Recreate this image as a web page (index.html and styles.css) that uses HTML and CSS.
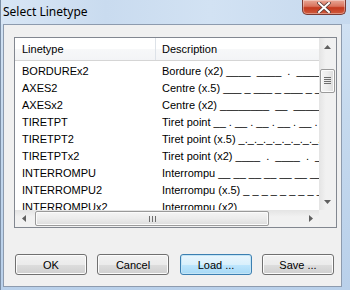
FILE: index.html
```html
<!DOCTYPE html>
<html>
<head>
<meta charset="utf-8">
<link rel="stylesheet" href="styles.css">
</head>
<body>
<div class="window">
  <div class="titlebar">
    <span class="title">Select Linetype</span>
    <div class="close">
      <svg width="14" height="11" viewBox="0 0 14 11"><path d="M2 1 L12 10 M12 1 L2 10" stroke="#5a3a36" stroke-width="3.6" stroke-linecap="square"/><path d="M2 1 L12 10 M12 1 L2 10" stroke="#ffffff" stroke-width="2" stroke-linecap="square"/></svg>
    </div>
  </div>
  <div class="client">
    <div class="list">
      <div class="list-main">
        <div class="view">
          <div class="header">
            <div class="hcell c1">Linetype</div>
            <div class="hcell c2">Description</div>
          </div>
          <div class="rows">
            <div class="row"><span class="c1">BORDUREx2</span><span class="c2">Bordure (x2) ____  ____  .  ____  ____  .  ___</span></div>
            <div class="row"><span class="c1">AXES2</span><span class="c2">Centre (x.5) ___ _ ___ _ ___ _ ___ _ ___ _ ___</span></div>
            <div class="row"><span class="c1">AXESx2</span><span class="c2">Centre (x2) ________  __  ________  __  _____</span></div>
            <div class="row"><span class="c1">TIRETPT</span><span class="c2">Tiret point __ . __ . __ . __ . __ . __ . __ . __</span></div>
            <div class="row"><span class="c1">TIRETPT2</span><span class="c2">Tiret point (x.5) _._._._._._._._._._._._._._._.</span></div>
            <div class="row"><span class="c1">TIRETPTx2</span><span class="c2">Tiret point (x2) ____  .  ____  .  ____  .  ___</span></div>
            <div class="row"><span class="c1">INTERROMPU</span><span class="c2">Interrompu __ __ __ __ __ __ __ __ __ __ __ __ __</span></div>
            <div class="row"><span class="c1">INTERROMPU2</span><span class="c2">Interrompu (x.5) _ _ _ _ _ _ _ _ _ _ _ _ _ _ _ _ _</span></div>
            <div class="row"><span class="c1">INTERROMPUx2</span><span class="c2">Interrompu (x2) ____ ____ ____ ____ ____ ____</span></div>
          </div>
        </div>
        <div class="vscroll">
          <div class="sbtn">
            <svg width="7" height="4" viewBox="0 0 7 4"><path d="M0 4 L3.5 0 L7 4 Z" fill="#606060"/></svg>
          </div>
          <div class="vtrack">
            <div class="vthumb"><span class="grip-v"></span></div>
          </div>
          <div class="sbtn">
            <svg width="7" height="4" viewBox="0 0 7 4"><path d="M0 0 L7 0 L3.5 4 Z" fill="#606060"/></svg>
          </div>
        </div>
      </div>
      <div class="hrow">
        <div class="hscroll">
          <div class="sbtn">
            <svg width="4" height="7" viewBox="0 0 4 7"><path d="M4 0 L4 7 L0 3.5 Z" fill="#606060"/></svg>
          </div>
          <div class="htrack">
            <div class="hthumb"><span class="grip-h"></span></div>
          </div>
          <div class="sbtn">
            <svg width="4" height="7" viewBox="0 0 4 7"><path d="M0 0 L4 3.5 L0 7 Z" fill="#606060"/></svg>
          </div>
        </div>
        <div class="corner"></div>
      </div>
    </div>
    <div class="buttons">
      <button class="btn">OK</button>
      <button class="btn">Cancel</button>
      <button class="btn default">Load ...</button>
      <button class="btn">Save ...</button>
    </div>
  </div>
</div>
</body>
</html>
```

FILE: styles.css
```css
* { box-sizing: border-box; }
html, body { margin: 0; padding: 0; }
body {
  width: 350px;
  height: 290px;
  overflow: hidden;
  font-family: "Liberation Sans", Arial, sans-serif;
  font-size: 11px;
  color: #000;
}
.window {
  width: 350px;
  height: 290px;
  display: flex;
  flex-direction: column;
  background: linear-gradient(180deg, #d3e3f4 0%, #c5d9ee 40%, #b9d0ea 100%);
  border-left: 1px solid #7c8fa6;
}
.titlebar {
  height: 24px;
  flex: none;
  display: flex;
  align-items: flex-start;
  justify-content: space-between;
  padding: 0 4px 0 2px;
  background: linear-gradient(90deg, #d8e6f5 0%, #c9dbef 30%, #d2e2f3 60%, #c6d9ee 100%);
}
.title {
  font-family: "Noto Sans", "Open Sans", sans-serif;
  font-size: 12px;
  line-height: 16px;
  margin-top: 4px;
  color: #000;
}
.close {
  width: 44px;
  height: 15px;
  border: 1px solid #7a3a33;
  border-top: none;
  border-radius: 0 0 5px 5px;
  background: linear-gradient(180deg, #e9a897 0%, #d9735d 45%, #c4391e 55%, #cf5a3c 100%);
  display: flex;
  align-items: center;
  justify-content: center;
  box-shadow: inset 0 0 0 1px rgba(255,255,255,0.35);
}
.close svg { display: block; }
.client {
  flex: none;
  height: 263px;
  margin: 0 8px 0 2px;
  background: #f0f0f0;
  border: 1px solid #8d9bae;
  padding: 12px 0 0 10px;
}
.list {
  width: 323px;
  height: 191px;
  border: 1px solid #828790;
  background: #fff;
  display: flex;
  flex-direction: column;
}
.list-main {
  display: flex;
  height: 172px;
}
.view {
  width: 304px;
  overflow: hidden;
  background: #fff;
}
.header {
  display: flex;
  height: 23px;
  background: linear-gradient(180deg, #ffffff 0%, #ffffff 50%, #f7f8f9 51%, #f3f4f6 100%);
  border-bottom: 1px solid #d5d5d5;
}
.hcell {
  line-height: 22px;
  white-space: nowrap;
}
.hcell.c1 {
  width: 141px;
  flex: none;
  padding-left: 7px;
  border-right: 1px solid #dde2e8;
}
.hcell.c2 {
  padding-left: 6px;
}
.rows {
  padding-top: 2px;
}
.row {
  display: flex;
  height: 17px;
  line-height: 17px;
  white-space: pre;
}
.row .c1 {
  width: 141px;
  flex: none;
  padding-left: 7px;
  overflow: hidden;
}
.row .c2 {
  padding-left: 6px;
  overflow: hidden;
}
.vscroll {
  width: 17px;
  display: flex;
  flex-direction: column;
  background: linear-gradient(90deg, #e4e4e4 0%, #f1f1f1 40%, #f1f1f1 100%);
}
.sbtn {
  width: 17px;
  height: 17px;
  flex: none;
  display: flex;
  align-items: center;
  justify-content: center;
}
.sbtn svg { display: block; }
.vtrack {
  flex: 1;
  padding-top: 14px;
}
.vthumb {
  width: 15px;
  height: 24px;
  margin-left: 1px;
  border: 1px solid #9a9a9a;
  border-radius: 2px;
  background: linear-gradient(90deg, #f5f5f5 0%, #ececec 50%, #dcdcdc 100%);
  box-shadow: inset 0 0 0 1px #fbfbfb;
  display: flex;
  align-items: center;
  justify-content: center;
}
.grip-v {
  width: 7px;
  height: 7px;
  background: repeating-linear-gradient(180deg, #6e6e6e 0 1px, transparent 1px 2px);
  margin-bottom: 1px;
}
.hrow {
  display: flex;
  height: 17px;
}
.hscroll {
  width: 304px;
  display: flex;
  background: linear-gradient(180deg, #e4e4e4 0%, #f1f1f1 40%, #f1f1f1 100%);
}
.htrack {
  flex: 1;
  padding-left: 3px;
  padding-right: 33px;
  display: flex;
  align-items: center;
}
.hthumb {
  flex: 1;
  height: 15px;
  border: 1px solid #9a9a9a;
  border-radius: 2px;
  background: linear-gradient(180deg, #f5f5f5 0%, #ececec 50%, #dcdcdc 100%);
  box-shadow: inset 0 0 0 1px #fbfbfb;
  display: flex;
  align-items: center;
  justify-content: center;
}
.grip-h {
  width: 7px;
  height: 6px;
  background: repeating-linear-gradient(90deg, #6e6e6e 0 1px, transparent 1px 3px);
}
.corner {
  width: 17px;
  background: #f0f0f0;
}
.buttons {
  display: flex;
  gap: 10px;
  margin-top: 26px;
  margin-left: 1px;
}
.btn {
  width: 72px;
  height: 21px;
  margin: 0;
  padding: 0;
  font-family: "Liberation Sans", Arial, sans-serif;
  font-size: 11px;
  color: #000;
  border: 1px solid #707070;
  border-radius: 3px;
  background: linear-gradient(180deg, #f2f2f2 0%, #ebebeb 50%, #dddddd 51%, #cfcfcf 100%);
  box-shadow: inset 0 0 0 1px #fcfcfc;
}
.btn:nth-child(3) { margin-left: 1px; }
.btn.default {
  border-color: #3c7fb1;
  background: linear-gradient(180deg, #eaf6fd 0%, #d9f0fc 50%, #bee6fd 51%, #a7d9f5 100%);
  box-shadow: inset 0 0 0 1px #c4e5f6;
}
```
